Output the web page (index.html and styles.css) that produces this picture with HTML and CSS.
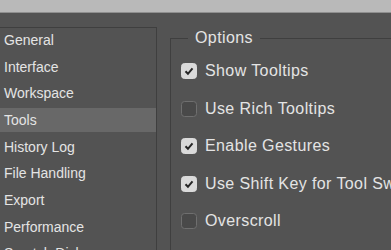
FILE: index.html
```html
<!DOCTYPE html>
<html lang="en">
<head>
    <meta charset="UTF-8">
    <meta name="viewport" content="width=device-width, initial-scale=1.0">
    <title>Preferences</title>
    <link rel="stylesheet" href="styles.css">
</head>
<body>
    <div class="titlebar"></div>

    <div class="prefs">
        <ul class="nav">
            <li>General</li>
            <li>Interface</li>
            <li>Workspace</li>
            <li class="active">Tools</li>
            <li>History Log</li>
            <li>File Handling</li>
            <li>Export</li>
            <li>Performance</li>
            <li>Scratch Disks</li>
        </ul>

        <fieldset class="options">
            <legend>Options</legend>
            <label class="option">
                <span class="box checked"><svg viewBox="0 0 16 16"><path d="M4 8.3l2.8 2.9L12 5"/></svg></span>
                Show Tooltips
            </label>
            <label class="option">
                <span class="box"></span>
                Use Rich Tooltips
            </label>
            <label class="option">
                <span class="box checked"><svg viewBox="0 0 16 16"><path d="M4 8.3l2.8 2.9L12 5"/></svg></span>
                Enable Gestures
            </label>
            <label class="option">
                <span class="box checked"><svg viewBox="0 0 16 16"><path d="M4 8.3l2.8 2.9L12 5"/></svg></span>
                Use Shift Key for Tool Switch
            </label>
            <label class="option">
                <span class="box"></span>
                Overscroll
            </label>
        </fieldset>
    </div>
</body>
</html>
```

FILE: styles.css
```css
body {
    font-family: "Liberation Sans", Arial, sans-serif;
    margin: 0;
    background-color: #535353;
    color: #e4e4e4;
    overflow: hidden;
    height: 250px;
}

.titlebar {
    height: 12px;
    background: #b9b9b9;
    border-bottom: 1px solid #8f8f8f;
}

.prefs {
    display: flex;
    align-items: flex-start;
}

.nav {
    flex: none;
    list-style: none;
    margin: 14px 0 0 0;
    padding: 0;
    width: 156px;
    height: 400px;
    border-top: 1px solid #3f3f3f;
    border-right: 1px solid #3f3f3f;
}

.nav li {
    height: 24px;
    line-height: 24px;
    margin-bottom: 2.67px;
    padding-left: 4px;
    font-size: 14px;
    white-space: nowrap;
}

.nav li.active {
    background: #686868;
}

.options {
    flex: none;
    margin: 15px 0 0 13px;
    padding: 0 0 0 10px;
    width: 400px;
    min-height: 300px;
    border: 1px solid #3f3f3f;
    border-right: none;
}

.options legend {
    margin-left: 7px;
    padding: 0 7px;
    font-size: 16px;
    line-height: 20px;
    letter-spacing: 0.4px;
}

.option {
    display: flex;
    align-items: center;
    gap: 8px;
    height: 24px;
    margin-top: 13.5px;
    font-size: 16px;
    letter-spacing: 0.4px;
    white-space: nowrap;
}

.option:first-of-type {
    margin-top: 11px;
}

.box {
    flex: none;
    width: 14px;
    height: 14px;
    border: 1px solid #6f6f6f;
    border-radius: 3.5px;
    background: #494949;
}

.box.checked {
    background: #dadada;
    border-color: #dadada;
}

.box svg {
    display: block;
    width: 14px;
    height: 14px;
    fill: none;
    stroke: #262626;
    stroke-width: 2.3;
}
```
